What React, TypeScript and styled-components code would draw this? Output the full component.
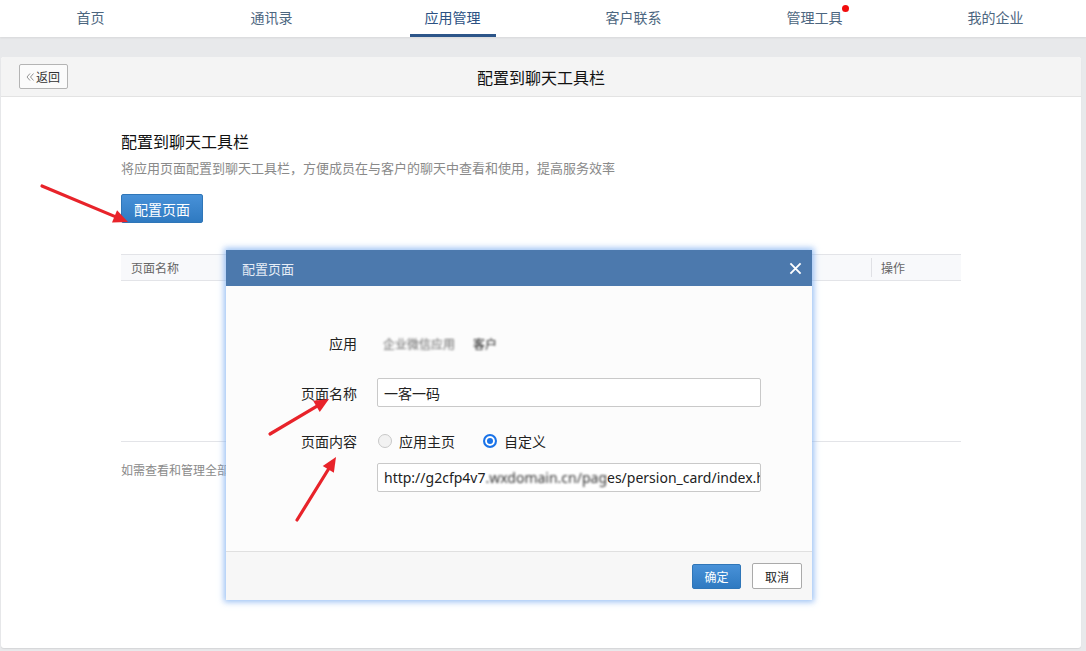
import styled, { createGlobalStyle } from 'styled-components';

const NAV_ITEMS = [
  { id: 'home', name: '首页' },
  { id: 'contacts', name: '通讯录' },
  { id: 'apps', name: '应用管理', active: true },
  { id: 'customer', name: '客户联系' },
  { id: 'tools', name: '管理工具', dot: true },
  { id: 'company', name: '我的企业' },
];

// annotation arrows drawn on top of the screenshot: [tailX, tailY, tipX, tipY]
const ARROWS: [number, number, number, number][] = [
  [42, 186, 128, 222],
  [270, 434, 329, 399],
  [297, 520, 336, 457],
];

const GlobalStyle = createGlobalStyle`
  html, body {
    margin: 0;
    padding: 0;
    background: #e8e9eb;
    font-family: "Liberation Sans", "Noto Sans CJK SC", sans-serif;
  }
  * {
    box-sizing: border-box;
  }
`;

const Arrow = ({ x1, y1, x2, y2 }: { x1: number; y1: number; x2: number; y2: number }) => {
  const angle = Math.atan2(y2 - y1, x2 - x1);
  const len = 16;
  const spread = 0.42;
  const ax = x2 - len * Math.cos(angle - spread);
  const ay = y2 - len * Math.sin(angle - spread);
  const bx = x2 - len * Math.cos(angle + spread);
  const by = y2 - len * Math.sin(angle + spread);
  const ex = x2 - 10 * Math.cos(angle);
  const ey = y2 - 10 * Math.sin(angle);
  return (
    <g>
      <line x1={x1} y1={y1} x2={ex} y2={ey} stroke="#e8232a" strokeWidth={3.2} strokeLinecap="round" />
      <polygon points={`${x2},${y2} ${ax},${ay} ${bx},${by}`} fill="#e8232a" />
    </g>
  );
};

const App = () => {
  return (
    <Page>
      <GlobalStyle />
      <NavBar>
        {NAV_ITEMS.map(({ id, name, active, dot }) => (
          <NavItem key={id} $active={!!active}>
            <NavLabel>
              {name}
              {dot && <RedDot />}
            </NavLabel>
          </NavItem>
        ))}
      </NavBar>

      <Main>
        <Card>
          <CardHeader>
            <BackButton>
              <BackIcon viewBox="0 0 10 10">
                <path d="M5 1.5 L2 5 L5 8.5 M8.5 1.5 L5.5 5 L8.5 8.5" fill="none" stroke="#888" strokeWidth="0.9" />
              </BackIcon>
              返回
            </BackButton>
            <HeaderTitle>配置到聊天工具栏</HeaderTitle>
            <span />
          </CardHeader>

          <CardBody>
            <SectionTitle>配置到聊天工具栏</SectionTitle>
            <SectionDesc>将应用页面配置到聊天工具栏，方便成员在与客户的聊天中查看和使用，提高服务效率</SectionDesc>
            <PrimaryButton>配置页面</PrimaryButton>

            <Table>
              <TableHead>
                <HeadCell>页面名称</HeadCell>
                <HeadCell $divider>操作</HeadCell>
              </TableHead>
              <TableEmpty />
            </Table>

            <Note>如需查看和管理全部已配置的聊天工具栏页面，可前往客户联系 - 聊天工具栏管理</Note>
          </CardBody>
        </Card>
      </Main>

      <Modal>
        <ModalHeader>
          <ModalTitle>配置页面</ModalTitle>
          <CloseIcon viewBox="0 0 14 14">
            <path d="M1.5 1.5 L12.5 12.5 M12.5 1.5 L1.5 12.5" stroke="#fff" strokeWidth="2" />
          </CloseIcon>
        </ModalHeader>
        <ModalBody>
          <FormRow $height={24} $offset={45}>
            <FormLabel>应用</FormLabel>
            <AppValue>
              <Blurred $tone="#666">企业微信应用</Blurred>
              <Blurred $tone="#111">客户</Blurred>
            </AppValue>
          </FormRow>
          <FormRow $height={29} $offset={23}>
            <FormLabel>页面名称</FormLabel>
            <TextInput>一客一码</TextInput>
          </FormRow>
          <FormRow $height={24} $offset={22}>
            <FormLabel>页面内容</FormLabel>
            <RadioGroup>
              <RadioOption>
                <Radio $checked={false} />
                应用主页
              </RadioOption>
              <RadioOption>
                <Radio $checked />
                自定义
              </RadioOption>
            </RadioGroup>
          </FormRow>
          <FormRow $height={29} $offset={10}>
            <FormLabel />
            <TextInput>
              http://g2cfp4v7
              <Blurred $tone="#333">.wxdomain.cn/pag</Blurred>
              es/persion_card/index.html
            </TextInput>
          </FormRow>
        </ModalBody>
        <ModalFooter>
          <SmallPrimary>确定</SmallPrimary>
          <SmallDefault>取消</SmallDefault>
        </ModalFooter>
      </Modal>

      <ArrowLayer viewBox="0 0 1086 651">
        {ARROWS.map(([x1, y1, x2, y2], i) => (
          <Arrow key={i} x1={x1} y1={y1} x2={x2} y2={y2} />
        ))}
      </ArrowLayer>
    </Page>
  );
};

const Page = styled.div`
  position: relative;
  width: 1086px;
  height: 651px;
  overflow: hidden;
  display: flex;
  flex-direction: column;
  background: #e8e9eb;
`;

const NavBar = styled.nav`
  display: grid;
  grid-template-columns: repeat(6, 1fr);
  height: 37px;
  background: #fff;
  box-shadow: 0 1px 2px rgba(0, 0, 0, 0.08);
  flex-shrink: 0;
`;

const NavItem = styled.div<{ $active: boolean }>`
  display: flex;
  justify-content: center;
  align-items: stretch;
  & > span {
    padding: 0 15px;
    color: ${({ $active }) => ($active ? '#2c5183' : '#4c6680')};
    border-bottom: 3px solid ${({ $active }) => ($active ? '#2c5589' : 'transparent')};
  }
`;

const NavLabel = styled.span`
  position: relative;
  display: flex;
  align-items: center;
  padding-top: 1px;
  font-size: 14px;
  font-family: "Noto Sans CJK SC", sans-serif;
`;

const RedDot = styled.i`
  position: absolute;
  right: 9px;
  top: 5px;
  width: 7px;
  height: 7px;
  border-radius: 50%;
  background: #f10d0d;
`;

const Main = styled.main`
  flex: 1;
  padding: 20px 5px 3px 1px;
  display: flex;
`;

const Card = styled.section`
  flex: 1;
  background: #fff;
  border-radius: 3px;
  box-shadow: 0 1px 1px rgba(0, 0, 0, 0.08);
  display: flex;
  flex-direction: column;
  overflow: hidden;
`;

const CardHeader = styled.header`
  display: grid;
  grid-template-columns: 1fr auto 1fr;
  align-items: center;
  height: 40px;
  padding: 0 18px;
  background: #f4f4f4;
  border-bottom: 1px solid #e3e3e3;
`;

const BackButton = styled.button`
  justify-self: start;
  display: flex;
  align-items: center;
  gap: 1px;
  height: 25px;
  padding: 0 7px 0 5px;
  background: #fbfbfb;
  border: 1px solid #b4b4b4;
  border-radius: 2px;
  font-size: 12px;
  color: #333;
  font-family: "Noto Sans CJK SC", sans-serif;
`;

const BackIcon = styled.svg`
  width: 10px;
  height: 10px;
`;

const HeaderTitle = styled.h1`
  margin: 0;
  font-size: 16px;
  font-weight: 400;
  color: #111;
  font-family: "Noto Sans CJK SC", sans-serif;
`;

const CardBody = styled.div`
  padding: 33px 120px 0;
  display: flex;
  flex-direction: column;
  align-items: flex-start;
  font-family: "Noto Sans CJK SC", sans-serif;
`;

const SectionTitle = styled.h2`
  margin: 0;
  font-size: 16px;
  line-height: 22px;
  font-weight: 400;
  color: #111;
`;

const SectionDesc = styled.p`
  margin: 7px 0 0;
  font-size: 13px;
  line-height: 18px;
  color: #8a8a8a;
`;

const PrimaryButton = styled.button`
  margin-top: 17px;
  width: 82px;
  height: 29px;
  border: 1px solid #2f76b8;
  border-radius: 2px;
  background: linear-gradient(#4891d8, #2f7ac1);
  color: #fff;
  font-size: 14px;
  font-family: "Noto Sans CJK SC", sans-serif;
`;

const Table = styled.div`
  margin-top: 31px;
  width: 100%;
  border-bottom: 1px solid #e3e4e8;
`;

const TableHead = styled.div`
  display: grid;
  grid-template-columns: 1fr 90px;
  height: 27px;
  background: #f8f9fb;
  border-top: 1px solid #e3e4e8;
  border-bottom: 1px solid #e3e4e8;
`;

const HeadCell = styled.div<{ $divider?: boolean }>`
  display: flex;
  align-items: center;
  padding-left: ${({ $divider }) => ($divider ? '9px' : '10px')};
  font-size: 12px;
  color: #666;
  border-left: ${({ $divider }) => ($divider ? '1px solid #e0e1e5' : 'none')};
  margin: ${({ $divider }) => ($divider ? '3px 0' : '0')};
`;

const TableEmpty = styled.div`
  height: 160px;
`;

const Note = styled.p`
  margin: 19px 0 0;
  font-size: 12px;
  line-height: 18px;
  color: #8a8a8a;
`;

const Modal = styled.div`
  position: absolute;
  left: 226px;
  top: 250px;
  width: 586px;
  height: 350px;
  display: flex;
  flex-direction: column;
  background: #fcfcfc;
  box-shadow: 0 0 6px 2px rgba(122, 172, 240, 0.75);
  font-family: "Noto Sans CJK SC", sans-serif;
`;

const ModalHeader = styled.div`
  display: flex;
  align-items: center;
  justify-content: space-between;
  height: 36px;
  padding: 0 10px 0 16px;
  background: #4c79ad;
`;

const ModalTitle = styled.span`
  font-size: 13px;
  color: #e6edf6;
`;

const CloseIcon = styled.svg`
  width: 13px;
  height: 13px;
`;

const ModalBody = styled.div`
  flex: 1;
  display: flex;
  flex-direction: column;
`;

const FormRow = styled.div<{ $height: number; $offset: number }>`
  display: flex;
  align-items: center;
  gap: 20px;
  height: ${({ $height }) => $height}px;
  margin-top: ${({ $offset }) => $offset}px;
`;

const FormLabel = styled.label`
  width: 131px;
  text-align: right;
  font-size: 14px;
  color: #222;
`;

const AppValue = styled.div`
  display: flex;
  gap: 18px;
  padding-left: 6px;
  font-size: 12px;
`;

const Blurred = styled.span<{ $tone: string }>`
  filter: blur(1.1px);
  color: ${({ $tone }) => $tone};
`;

const TextInput = styled.div`
  width: 384px;
  height: 29px;
  display: flex;
  align-items: center;
  padding: 0 6px;
  background: #fff;
  border: 1px solid #c9c9c9;
  border-radius: 2px;
  font-size: 14px;
  color: #222;
  white-space: nowrap;
  overflow: hidden;
  font-family: "Noto Sans", "Noto Sans CJK SC", sans-serif;
`;

const RadioGroup = styled.div`
  display: flex;
  gap: 28px;
  padding-left: 1px;
`;

const RadioOption = styled.label`
  display: flex;
  align-items: center;
  gap: 7px;
  font-size: 14px;
  color: #222;
`;

const Radio = styled.span<{ $checked: boolean }>`
  width: 14px;
  height: 14px;
  border-radius: 50%;
  border: ${({ $checked }) => ($checked ? '2px solid #1a73e8' : '1px solid #c8c8c8')};
  background: ${({ $checked }) => ($checked ? '#fff' : '#f2f2f2')};
  box-shadow: ${({ $checked }) => ($checked ? 'inset 0 0 0 2px #fff, inset 0 0 0 6px #1a73e8' : 'none')};
`;

const ModalFooter = styled.div`
  display: flex;
  justify-content: flex-end;
  align-items: center;
  gap: 11px;
  height: 49px;
  padding: 0 10px 0 0;
  background: #f7f7f7;
  border-top: 1px solid #e0e0e0;
`;

const SmallPrimary = styled.button`
  width: 49px;
  height: 25px;
  border: 1px solid #2f76b8;
  border-radius: 2px;
  background: linear-gradient(#4891d8, #2f7ac1);
  color: #fff;
  font-size: 12px;
  font-family: "Noto Sans CJK SC", sans-serif;
`;

const SmallDefault = styled.button`
  width: 50px;
  height: 26px;
  border: 1px solid #aaa;
  border-radius: 2px;
  background: #fff;
  color: #222;
  font-size: 12px;
  font-family: "Noto Sans CJK SC", sans-serif;
`;

const ArrowLayer = styled.svg`
  position: absolute;
  left: 0;
  top: 0;
  width: 1086px;
  height: 651px;
  pointer-events: none;
`;

export default App;
